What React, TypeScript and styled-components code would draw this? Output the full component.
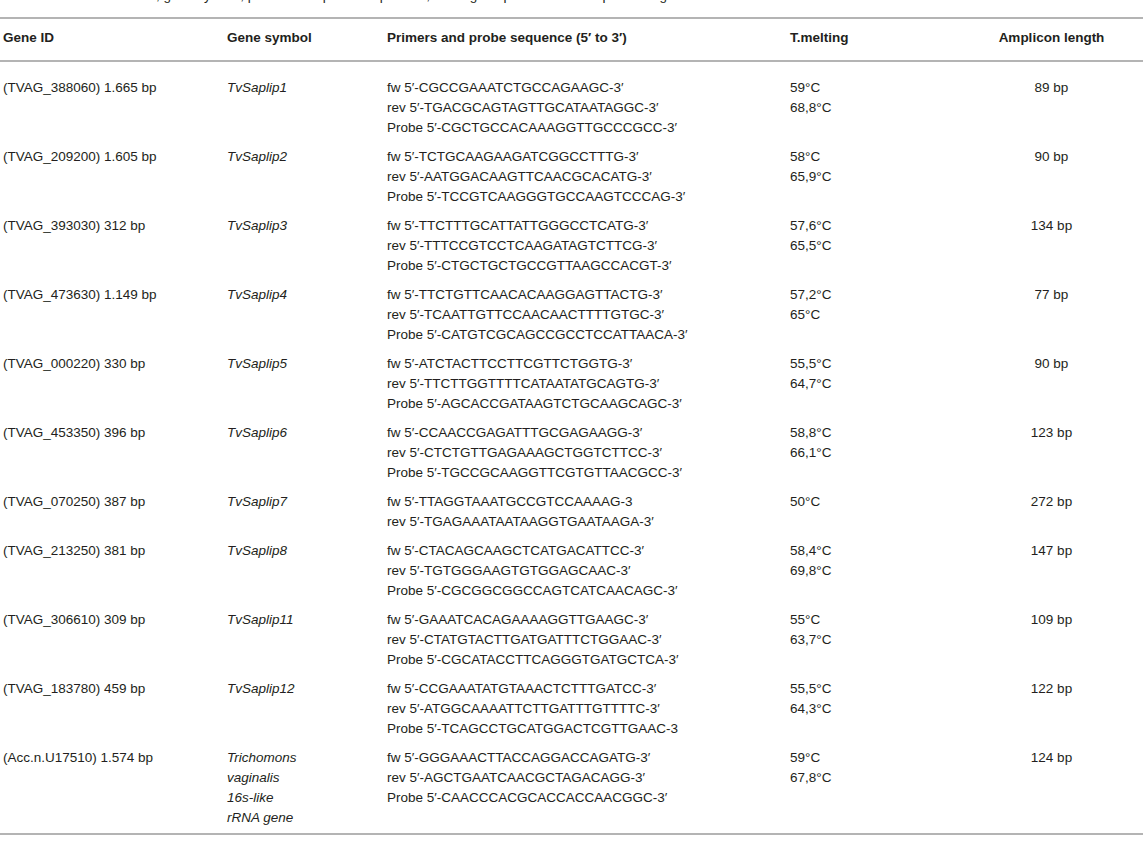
import styled, { createGlobalStyle } from 'styled-components';

const GlobalStyle = createGlobalStyle`
  body {
    margin: 0;
    background: #ffffff;
    font-family: 'Liberation Sans', Arial, sans-serif;
    color: #231f20;
  }
`;

const Page = styled.div`
  width: 1143px;
  overflow: hidden;
`;

const Caption = styled.div`
  font-size: 13.5px;
  line-height: 20px;
  margin-top: -14px;
  height: 20px;
  padding-left: 3px;
  white-space: nowrap;
`;

const Table = styled.table`
  width: 1143px;
  margin-top: 11px;
  border-collapse: collapse;
  table-layout: fixed;
  font-size: 13.5px;
  line-height: 20px;
  border-top: 2px solid #b4b4b4;
  border-bottom: 2px solid #b4b4b4;
`;

const HeadCell = styled.th<{ $center?: boolean }>`
  font-weight: bold;
  text-align: ${({ $center }) => ($center ? 'center' : 'left')};
  padding: 9px 3px 12px;
  border-bottom: 2px solid #b4b4b4;
  vertical-align: top;
`;

const Row = styled.tr<{ $first?: boolean; $last?: boolean }>`
  & > td {
    padding-top: ${({ $first }) => ($first ? '16px' : '4.5px')};
    padding-bottom: 4.5px;
  }
`;

const Cell = styled.td<{ $center?: boolean; $italic?: boolean }>`
  padding-left: 3px;
  padding-right: 3px;
  vertical-align: top;
  text-align: ${({ $center }) => ($center ? 'center' : 'left')};
  font-style: ${({ $italic }) => ($italic ? 'italic' : 'normal')};
`;

const Line = styled.div`
  white-space: nowrap;
`;

interface Primer {
  id: string;
  symbol: string[];
  seq: string[];
  tm: string[];
  len: string;
}

const rows: Primer[] = [
  {
    id: '(TVAG_388060) 1.665 bp',
    symbol: ['TvSaplip1'],
    seq: ['fw 5′-CGCCGAAATCTGCCAGAAGC-3′', 'rev 5′-TGACGCAGTAGTTGCATAATAGGC-3′', 'Probe 5′-CGCTGCCACAAAGGTTGCCCGCC-3′'],
    tm: ['59°C', '68,8°C'],
    len: '89 bp',
  },
  {
    id: '(TVAG_209200) 1.605 bp',
    symbol: ['TvSaplip2'],
    seq: ['fw 5′-TCTGCAAGAAGATCGGCCTTTG-3′', 'rev 5′-AATGGACAAGTTCAACGCACATG-3′', 'Probe 5′-TCCGTCAAGGGTGCCAAGTCCCAG-3′'],
    tm: ['58°C', '65,9°C'],
    len: '90 bp',
  },
  {
    id: '(TVAG_393030) 312 bp',
    symbol: ['TvSaplip3'],
    seq: ['fw 5′-TTCTTTGCATTATTGGGCCTCATG-3′', 'rev 5′-TTTCCGTCCTCAAGATAGTCTTCG-3′', 'Probe 5′-CTGCTGCTGCCGTTAAGCCACGT-3′'],
    tm: ['57,6°C', '65,5°C'],
    len: '134 bp',
  },
  {
    id: '(TVAG_473630) 1.149 bp',
    symbol: ['TvSaplip4'],
    seq: ['fw 5′-TTCTGTTCAACACAAGGAGTTACTG-3′', 'rev 5′-TCAATTGTTCCAACAACTTTTGTGC-3′', 'Probe 5′-CATGTCGCAGCCGCCTCCATTAACA-3′'],
    tm: ['57,2°C', '65°C'],
    len: '77 bp',
  },
  {
    id: '(TVAG_000220) 330 bp',
    symbol: ['TvSaplip5'],
    seq: ['fw 5′-ATCTACTTCCTTCGTTCTGGTG-3′', 'rev 5′-TTCTTGGTTTTCATAATATGCAGTG-3′', 'Probe 5′-AGCACCGATAAGTCTGCAAGCAGC-3′'],
    tm: ['55,5°C', '64,7°C'],
    len: '90 bp',
  },
  {
    id: '(TVAG_453350) 396 bp',
    symbol: ['TvSaplip6'],
    seq: ['fw 5′-CCAACCGAGATTTGCGAGAAGG-3′', 'rev 5′-CTCTGTTGAGAAAGCTGGTCTTCC-3′', 'Probe 5′-TGCCGCAAGGTTCGTGTTAACGCC-3′'],
    tm: ['58,8°C', '66,1°C'],
    len: '123 bp',
  },
  {
    id: '(TVAG_070250) 387 bp',
    symbol: ['TvSaplip7'],
    seq: ['fw 5′-TTAGGTAAATGCCGTCCAAAAG-3', 'rev 5′-TGAGAAATAATAAGGTGAATAAGA-3′'],
    tm: ['50°C'],
    len: '272 bp',
  },
  {
    id: '(TVAG_213250) 381 bp',
    symbol: ['TvSaplip8'],
    seq: ['fw 5′-CTACAGCAAGCTCATGACATTCC-3′', 'rev 5′-TGTGGGAAGTGTGGAGCAAC-3′', 'Probe 5′-CGCGGCGGCCAGTCATCAACAGC-3′'],
    tm: ['58,4°C', '69,8°C'],
    len: '147 bp',
  },
  {
    id: '(TVAG_306610) 309 bp',
    symbol: ['TvSaplip11'],
    seq: ['fw 5′-GAAATCACAGAAAAGGTTGAAGC-3′', 'rev 5′-CTATGTACTTGATGATTTCTGGAAC-3′', 'Probe 5′-CGCATACCTTCAGGGTGATGCTCA-3′'],
    tm: ['55°C', '63,7°C'],
    len: '109 bp',
  },
  {
    id: '(TVAG_183780) 459 bp',
    symbol: ['TvSaplip12'],
    seq: ['fw 5′-CCGAAATATGTAAACTCTTTGATCC-3′', 'rev 5′-ATGGCAAAATTCTTGATTTGTTTTC-3′', 'Probe 5′-TCAGCCTGCATGGACTCGTTGAAC-3'],
    tm: ['55,5°C', '64,3°C'],
    len: '122 bp',
  },
  {
    id: '(Acc.n.U17510) 1.574 bp',
    symbol: ['Trichomons', 'vaginalis', '16s-like', 'rRNA gene'],
    seq: ['fw 5′-GGGAAACTTACCAGGACCAGATG-3′', 'rev 5′-AGCTGAATCAACGCTAGACAGG-3′', 'Probe 5′-CAACCCACGCACCACCAACGGC-3′'],
    tm: ['59°C', '67,8°C'],
    len: '124 bp',
  },
];

const App = () => (
  <Page>
    <GlobalStyle />
    <Caption>
      Gene accession numbers, gene symbol, primers and probe sequences, melting temperature and amplicon length.
    </Caption>
    <Table>
      <colgroup>
        <col style={{ width: 224 }} />
        <col style={{ width: 160 }} />
        <col style={{ width: 403 }} />
        <col style={{ width: 173 }} />
        <col style={{ width: 183 }} />
      </colgroup>
      <thead>
        <tr>
          <HeadCell>Gene ID</HeadCell>
          <HeadCell>Gene symbol</HeadCell>
          <HeadCell>Primers and probe sequence (5′ to 3′)</HeadCell>
          <HeadCell>T.melting</HeadCell>
          <HeadCell $center>Amplicon length</HeadCell>
        </tr>
      </thead>
      <tbody>
        {rows.map((row, i) => (
          <Row key={row.id} $first={i === 0}>
            <Cell>{row.id}</Cell>
            <Cell $italic>
              {row.symbol.map((s) => (
                <Line key={s}>{s}</Line>
              ))}
            </Cell>
            <Cell>
              {row.seq.map((s) => (
                <Line key={s}>{s}</Line>
              ))}
            </Cell>
            <Cell>
              {row.tm.map((t) => (
                <Line key={t}>{t}</Line>
              ))}
            </Cell>
            <Cell $center>{row.len}</Cell>
          </Row>
        ))}
      </tbody>
    </Table>
  </Page>
);

export default App;
